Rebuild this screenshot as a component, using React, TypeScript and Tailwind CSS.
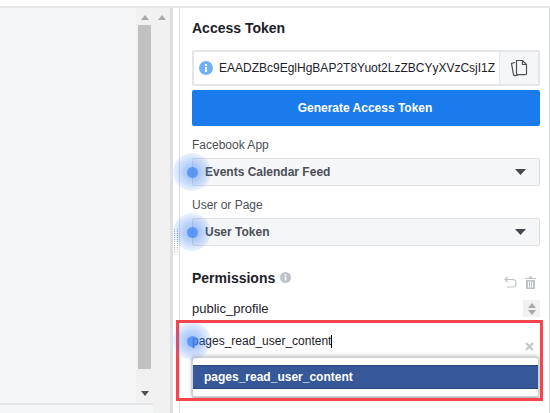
function Pulse({ className }: { className: string }) {
  return (
    <div className={`absolute w-[38px] h-[38px] rounded-full flex items-center justify-center bg-[radial-gradient(circle,rgba(66,133,244,0.55)_0%,rgba(66,133,244,0.36)_35%,rgba(66,133,244,0.1)_70%,rgba(66,133,244,0.02)_100%)] ${className}`}>
      <div className="w-[11px] h-[11px] rounded-full bg-[#4285f4]/70" />
    </div>
  );
}

function Arrow({ dir, color, className = '' }: { dir: 'up' | 'down'; color: string; className?: string }) {
  return (
    <svg width="8" height="5" viewBox="0 0 8 5" className={className}>
      <path d={dir === 'up' ? 'M4 0L8 5H0Z' : 'M0 0H8L4 5Z'} fill={color} />
    </svg>
  );
}

function SelectBox({ label }: { label: string }) {
  return (
    <div className="h-[28px] bg-[#f5f6f7] border border-[#dddfe2] rounded-[2px] flex items-center justify-between pl-[12px] pr-[13px]">
      <span className="text-[12px] font-bold text-[#4b4f56]">{label}</span>
      <svg width="11" height="6" viewBox="0 0 11 6"><path d="M0 0H11L5.5 6Z" fill="#444950" /></svg>
    </div>
  );
}

export default function App() {
  return (
    <div className="relative w-[550px] h-[413px] overflow-hidden bg-white flex flex-col font-['Liberation_Sans',Arial,sans-serif] text-[#1d2129]">
      <div className="h-[8px] shrink-0 border-b-2 border-[#e4e6e8]" />
      <div className="flex flex-1 min-h-0">
        {/* left panel + scrollbars */}
        <div className="w-[153px] shrink-0 flex flex-col">
          <div className="flex flex-1 min-h-0">
            <div className="w-[136px] bg-[#f5f6f7]" />
            <div className="w-[17px] bg-[#f1f1f1] flex flex-col items-center">
              <Arrow dir="up" color="#a9a9a9" className="mt-[7px]" />
              <div className="w-[13px] h-[344px] bg-[#c1c1c1] mt-[5px]" />
              <Arrow dir="down" color="#505050" className="mt-[22px]" />
            </div>
          </div>
          <div className="h-[10px] shrink-0 bg-[#f5f6f7] border-t-2 border-[#e4e6e8]" />
        </div>
        <div className="w-[17px] shrink-0 bg-[#f1f1f1] flex justify-center">
          <Arrow dir="up" color="#a9a9a9" className="mt-[7px]" />
        </div>
        <div className="w-[3px] shrink-0 bg-[#dddfe2]" />
        <div className="w-[6px] shrink-0 bg-white relative">
          <div className="absolute left-[1px] top-[221px] h-[23px] w-[4px] border-x border-dotted border-[#b5b8bd]" />
        </div>
        {/* right panel */}
        <div className="flex-1 border-l border-r border-[#dddfe2] pl-[12px] pr-[9px]">
          <h2 className="text-[14px] leading-[16px] font-bold mt-[12px]">Access Token</h2>
          <div className="h-[36px] mt-[14px] border-2 border-[#e4e6eb] rounded-[2px] flex items-center">
            <svg width="14" height="14" viewBox="0 0 14 14" className="ml-[5px] shrink-0">
              <circle cx="7" cy="7" r="7" fill="#6fb1f7" />
              <rect x="6" y="6" width="2" height="5" fill="#fff" />
              <rect x="6" y="3" width="2" height="2" fill="#fff" />
            </svg>
            <span className="ml-[6px] text-[12px] whitespace-nowrap flex-1 overflow-hidden">EAADZBc9EglHgBAP2T8Yuot2LzZBCYyXVzCsjI1Z</span>
            <div className="w-[39px] h-full shrink-0 bg-[#f5f6f7] border-l border-[#e4e6eb] flex items-center justify-center">
              <svg width="18" height="18" viewBox="0 0 18 18" fill="none" stroke="#4b4f56" strokeWidth="1.2">
                <path d="M6.5 1.5H12.5L16.5 5.5V14.5C16.5 15.2 16 15.7 15.3 15.7H7.7C7 15.7 6.5 15.2 6.5 14.5Z" />
                <path d="M12.5 1.5V5.5H16.5" />
                <path d="M5 3.5L1.5 4.5L3.5 15.5C3.7 16.3 4.3 16.7 5.1 16.6L8 16" />
              </svg>
            </div>
          </div>
          <button className="block w-full h-[36px] mt-[4px] pr-[2px] bg-[#1a7bec] rounded-[2px] text-white text-[12px] font-bold">Generate Access Token</button>
          <div className="text-[12px] leading-[14px] text-[#4b4f56] mt-[12px]">Facebook App</div>
          <div className="mt-[6px]"><SelectBox label="Events Calendar Feed" /></div>
          <div className="text-[12px] leading-[14px] text-[#4b4f56] mt-[12px]">User or Page</div>
          <div className="mt-[6px]"><SelectBox label="User Token" /></div>
          <div className="flex items-center mt-[24px] h-[16px]">
            <span className="text-[14px] font-bold">Permissions</span>
            <svg width="11" height="11" viewBox="0 0 11 11" className="ml-[5px] mb-[2px]">
              <circle cx="5.5" cy="5.5" r="5.5" fill="#bec2c9" />
              <rect x="4.7" y="4.6" width="1.6" height="3.8" fill="#fff" />
              <rect x="4.7" y="2.4" width="1.6" height="1.5" fill="#fff" />
            </svg>
            <div className="ml-auto flex items-center gap-[8px] mt-[9px] mr-[4px]">
              <svg width="13" height="13" viewBox="0 0 13 13" fill="none" stroke="#bec2c9" strokeWidth="1.2">
                <path d="M3.5 1L1 3.5L3.5 6" />
                <path d="M1 3.5H8.5C10.6 3.5 12 5 12 7.2C12 9.4 10.6 11 8.5 11H3" />
              </svg>
              <svg width="11" height="13" viewBox="0 0 11 13" fill="#bec2c9">
                <path d="M0 2H4V0.5H7V2H11V3H0Z" />
                <path d="M1 4H10V12C10 12.6 9.6 13 9 13H2C1.4 13 1 12.6 1 12ZM3 5.5V11.5H4V5.5ZM5 5.5V11.5H6V5.5ZM7 5.5V11.5H8V5.5Z" fillRule="evenodd" />
              </svg>
            </div>
          </div>
          <div className="flex items-center justify-between mt-[10px] h-[24px]">
            <span className="text-[13px] text-[#1d2129] mt-[1px]">public_profile</span>
            <div className="w-[17px] h-[17px] bg-[#f1f1f1] flex flex-col items-center justify-center gap-[2px] mt-[1px]">
              <Arrow dir="up" color="#a9a9a9" />
              <Arrow dir="down" color="#a9a9a9" />
            </div>
          </div>
          <div className="flex items-center justify-between mt-[12px] h-[18px]">
            <span className="text-[12px] text-[#1d2129] flex items-center">pages_read_user_content<span className="inline-block w-[1px] h-[13px] bg-black" /></span>
            <svg width="9" height="9" viewBox="0 0 9 9" className="mt-[10px] mr-[6px]" stroke="#bec2c9" strokeWidth="2"><path d="M1 1L8 8M8 1L1 8" /></svg>
          </div>
        </div>
      </div>

      {/* autocomplete menu */}
      <div className="absolute left-[192px] top-[357px] w-[347px] h-[40px] bg-white rounded-[2px] border border-[#d0d1d5] shadow-[0_-1px_4px_rgba(0,0,0,0.25),0_1px_2px_rgba(0,0,0,0.3)] pt-[7px]">
        <div className="h-[24px] bg-[#365899] border-y border-[#29487d] flex items-center pl-[11px] text-[12px] font-bold text-white">pages_read_user_content</div>
      </div>

      {/* annotation */}
      <div className="absolute left-[176px] top-[320px] w-[367px] h-[81px] border-[3px] border-[#f8444b] pointer-events-none" />

      <Pulse className="left-[173px] top-[153px]" />
      <Pulse className="left-[173px] top-[213px]" />
      <Pulse className="left-[173px] top-[322px]" />
    </div>
  );
}
